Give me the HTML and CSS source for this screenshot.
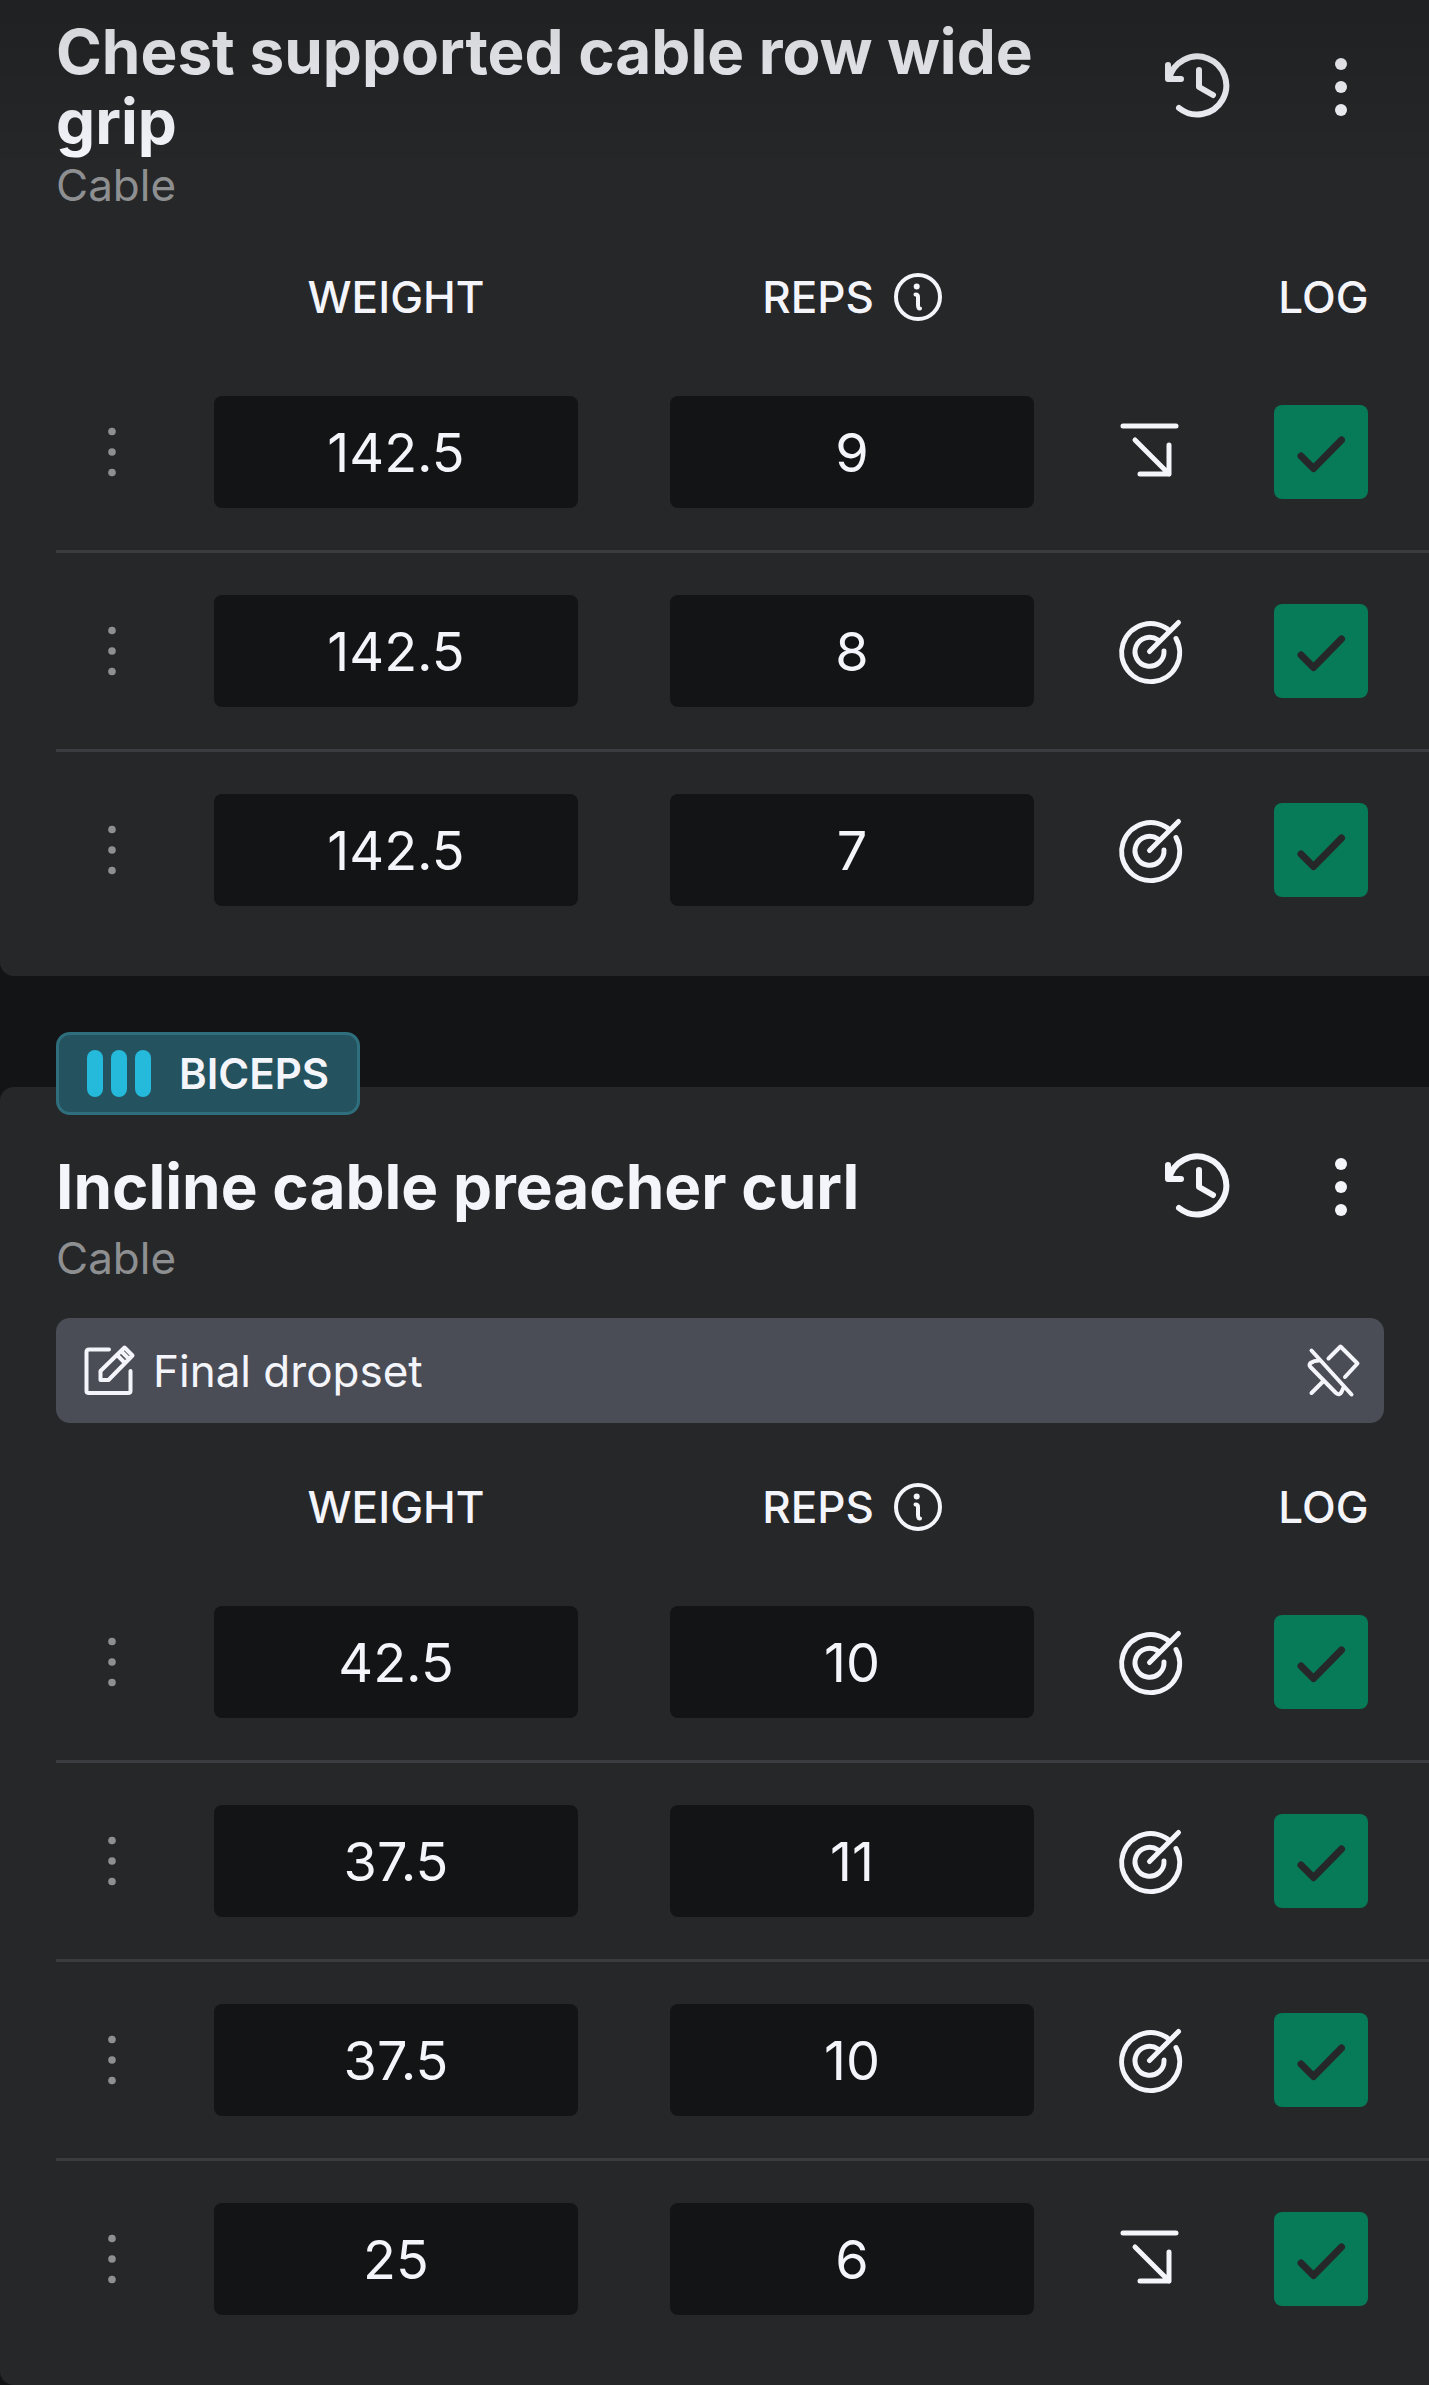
FILE: index.html
```html
<!DOCTYPE html>
<html lang="en">
<head>
  <meta charset="UTF-8" />
  <meta name="viewport" content="width=device-width, initial-scale=1.0" />
  <title>Workout</title>
  <link rel="stylesheet" href="styles.css">
</head>
<body>
  <svg class="sprite" aria-hidden="true">
    <symbol id="i-history" viewBox="0 0 72 72">
      <path d="M16 57A29 29 0 1 0 6 28M5 14V28H18M36 19V36L50 44" stroke-width="6" />
    </symbol>
    <symbol id="i-more" viewBox="0 0 72 72">
      <g class="solid"><circle cx="36" cy="13" r="6" /><circle cx="36" cy="36" r="6" /><circle cx="36" cy="59" r="6" /></g>
    </symbol>
    <symbol id="i-grip" viewBox="0 0 12 52">
      <g class="solid"><circle cx="6" cy="5.5" r="3.8" /><circle cx="6" cy="26" r="3.8" /><circle cx="6" cy="46.5" r="3.8" /></g>
    </symbol>
    <symbol id="i-info" viewBox="0 0 48 48">
      <circle cx="24" cy="24" r="22" stroke-width="4" />
      <circle class="solid" cx="22.7" cy="13.5" r="3" />
      <path d="M21.5 21.5Q24 21.5 24 24V32Q24 35.500 26 35.500" stroke-width="4" />
    </symbol>
    <symbol id="i-arrow" viewBox="-2 -2 68 68">
      <path d="M6 6H59M18 20L52 54M52 25V54H23" stroke-width="5" />
    </symbol>
    <symbol id="i-target" viewBox="-2 -2 68 68">
      <path d="M59 19.500A29 29 0 1 1 53 12M47 32A14.500 14.500 0 1 1 41 21M61.500 3.500L32.500 32.500" stroke-width="5" />
    </symbol>
    <symbol id="i-check" viewBox="0 0 94 94">
      <path d="M27 51L39.500 63.500L67.500 35" stroke-width="7" />
    </symbol>
    <symbol id="i-edit" viewBox="0 0 56 56">
      <path d="M28 6.500H8Q5.500 6.500 5.500 9V48Q5.500 50 8 50H47Q49.500 50 49.500 48V28M43.500 4.500L51.500 12.500L27.500 37H19.500V28ZM36 12L44 20M40 8L48 16" stroke-width="4" />
    </symbol>
    <symbol id="i-unpin" viewBox="0 0 56 56">
      <path d="M5.500 7.500L45.500 51.500M22.500 15.500L34.500 3.500L51.500 20.500L39 34M13 17.500Q8 17.500 4.500 20Q2.500 22 4.500 24L30 50Q33.500 53 35.500 49L38 43.500M17.500 38L5.500 50" stroke-width="4" />
    </symbol>
  </svg>

  <main>
    <section class="card card-first">
      <div class="card-head">
        <h2>Chest supported cable row wide grip</h2>
        <button class="icon-btn" aria-label="History"><svg><use href="#i-history" /></svg></button>
        <button class="icon-btn" aria-label="More"><svg><use href="#i-more" /></svg></button>
      </div>
      <p class="equipment">Cable</p>
      <table class="sets">
        <thead>
          <tr>
            <th class="col-grip"></th>
            <th>WEIGHT</th>
            <th><span class="reps">REPS <svg class="info"><use href="#i-info" /></svg></span></th>
            <th class="col-goal"></th>
            <th class="col-log">LOG</th>
          </tr>
        </thead>
        <tbody>
          <tr>
            <td><button class="grip" aria-label="Set options"><svg><use href="#i-grip" /></svg></button></td>
            <td><input type="text" value="142.5" aria-label="Weight" /></td>
            <td><input type="text" value="9" aria-label="Reps" /></td>
            <td><svg class="goal"><use href="#i-arrow" /></svg></td>
            <td><label class="check"><input type="checkbox" checked aria-label="Log set" /><svg><use href="#i-check" /></svg></label></td>
          </tr>
          <tr>
            <td><button class="grip" aria-label="Set options"><svg><use href="#i-grip" /></svg></button></td>
            <td><input type="text" value="142.5" aria-label="Weight" /></td>
            <td><input type="text" value="8" aria-label="Reps" /></td>
            <td><svg class="goal"><use href="#i-target" /></svg></td>
            <td><label class="check"><input type="checkbox" checked aria-label="Log set" /><svg><use href="#i-check" /></svg></label></td>
          </tr>
          <tr>
            <td><button class="grip" aria-label="Set options"><svg><use href="#i-grip" /></svg></button></td>
            <td><input type="text" value="142.5" aria-label="Weight" /></td>
            <td><input type="text" value="7" aria-label="Reps" /></td>
            <td><svg class="goal"><use href="#i-target" /></svg></td>
            <td><label class="check"><input type="checkbox" checked aria-label="Log set" /><svg><use href="#i-check" /></svg></label></td>
          </tr>
        </tbody>
      </table>
    </section>

    <section class="card">
      <div class="muscle"><span class="bars"><i></i><i></i><i></i></span>BICEPS</div>
      <div class="card-head">
        <h2>Incline cable preacher curl</h2>
        <button class="icon-btn" aria-label="History"><svg><use href="#i-history" /></svg></button>
        <button class="icon-btn" aria-label="More"><svg><use href="#i-more" /></svg></button>
      </div>
      <p class="equipment">Cable</p>
      <div class="note">
        <button class="note-text"><svg><use href="#i-edit" /></svg>Final dropset</button>
        <button class="note-pin" aria-label="Unpin note"><svg><use href="#i-unpin" /></svg></button>
      </div>
      <table class="sets">
        <thead>
          <tr>
            <th class="col-grip"></th>
            <th>WEIGHT</th>
            <th><span class="reps">REPS <svg class="info"><use href="#i-info" /></svg></span></th>
            <th class="col-goal"></th>
            <th class="col-log">LOG</th>
          </tr>
        </thead>
        <tbody>
          <tr>
            <td><button class="grip" aria-label="Set options"><svg><use href="#i-grip" /></svg></button></td>
            <td><input type="text" value="42.5" aria-label="Weight" /></td>
            <td><input type="text" value="10" aria-label="Reps" /></td>
            <td><svg class="goal"><use href="#i-target" /></svg></td>
            <td><label class="check"><input type="checkbox" checked aria-label="Log set" /><svg><use href="#i-check" /></svg></label></td>
          </tr>
          <tr>
            <td><button class="grip" aria-label="Set options"><svg><use href="#i-grip" /></svg></button></td>
            <td><input type="text" value="37.5" aria-label="Weight" /></td>
            <td><input type="text" value="11" aria-label="Reps" /></td>
            <td><svg class="goal"><use href="#i-target" /></svg></td>
            <td><label class="check"><input type="checkbox" checked aria-label="Log set" /><svg><use href="#i-check" /></svg></label></td>
          </tr>
          <tr>
            <td><button class="grip" aria-label="Set options"><svg><use href="#i-grip" /></svg></button></td>
            <td><input type="text" value="37.5" aria-label="Weight" /></td>
            <td><input type="text" value="10" aria-label="Reps" /></td>
            <td><svg class="goal"><use href="#i-target" /></svg></td>
            <td><label class="check"><input type="checkbox" checked aria-label="Log set" /><svg><use href="#i-check" /></svg></label></td>
          </tr>
          <tr>
            <td><button class="grip" aria-label="Set options"><svg><use href="#i-grip" /></svg></button></td>
            <td><input type="text" value="25" aria-label="Weight" /></td>
            <td><input type="text" value="6" aria-label="Reps" /></td>
            <td><svg class="goal"><use href="#i-arrow" /></svg></td>
            <td><label class="check"><input type="checkbox" checked aria-label="Log set" /><svg><use href="#i-check" /></svg></label></td>
          </tr>
        </tbody>
      </table>
    </section>
  </main>
</body>
</html>
```
FILE: styles.css
```css
* {
  box-sizing: border-box;
}
body {
  margin: 0;
  min-height: 100vh;
  font-family: Inter, sans-serif;
  font-size: 44px;
  background: #131416;
  color: #f4f5fa;
}
/* fade under the top bar */
body::before {
  content: "";
  position: fixed;
  top: 0;
  left: 0;
  right: 0;
  height: 160px;
  background: linear-gradient(rgba(0, 0, 0, 0.15), rgba(0, 0, 0, 0));
  pointer-events: none;
  z-index: 1;
}
button {
  font: inherit;
  color: inherit;
  background: none;
  border: none;
  padding: 0;
  cursor: pointer;
}
svg {
  display: block;
  fill: none;
  stroke: currentColor;
  stroke-linecap: round;
  stroke-linejoin: round;
}
.solid {
  fill: currentColor;
  stroke: none;
}
.sprite {
  position: absolute;
  width: 0;
  height: 0;
}
.card {
  position: relative;
  background: #262729;
  border-radius: 14px 0 0 14px;
  padding: 57px 0 28px 56px;
}
.card-first {
  border-top-left-radius: 0;
  padding-top: 17px;
  margin-bottom: 111px;
}
.card-head {
  display: flex;
  align-items: center;
  gap: 56px;
  min-height: 86px;
  padding-right: 45px;
}
.card-head h2 {
  flex: 1;
  margin: 0;
  font-size: 62px;
  line-height: 70px;
  font-weight: 700;
}
.icon-btn {
  width: 86px;
  height: 72px;
}
.icon-btn svg {
  width: 72px;
  height: 72px;
  margin: 0 auto;
}
.equipment {
  margin: 0;
  line-height: 56px;
  color: #8e8f91;
}
.muscle {
  position: absolute;
  top: -55px;
  left: 56px;
  height: 83px;
  display: flex;
  align-items: center;
  gap: 28px;
  padding: 0 28px;
  border: 3px solid #2f6f7d;
  border-radius: 14px;
  background: #24535f;
  font-size: 42px;
  font-weight: 600;
}
.bars {
  display: flex;
  gap: 8px;
}
.bars i {
  width: 16px;
  height: 47px;
  border-radius: 8px;
  background: #25b9dc;
}
.note {
  display: flex;
  align-items: center;
  justify-content: space-between;
  height: 105px;
  margin: 32px 45px 0 0;
  padding: 0 22px 0 25px;
  border-radius: 14px;
  background: #4b4d56;
}
.note svg {
  width: 56px;
  height: 56px;
}
.note-text {
  display: flex;
  align-items: center;
  gap: 16px;
}
.sets {
  width: 100%;
  table-layout: fixed;
  border-spacing: 0;
}
.sets th {
  height: 141px;
  padding: 27px 0 0;
  font-size: 44px;
  font-weight: 500;
}
.sets .col-grip {
  width: 112px;
}
.sets .col-goal {
  width: 138px;
}
.sets .col-log {
  width: 211px;
}
.reps {
  display: flex;
  align-items: center;
  justify-content: center;
  gap: 20px;
}
.info {
  width: 48px;
  height: 48px;
}
.sets td {
  height: 199px;
  padding: 42px 0;
  border-bottom: 3px solid #3b3c3f;
}
.sets tbody tr:last-child td {
  height: 196px;
  border-bottom: none;
}
.sets td:nth-child(2), .sets td:nth-child(3) {
  padding: 42px 46px;
}
.sets td:last-child {
  padding-right: 5px;
}
.sets input[type="text"] {
  display: block;
  width: 100%;
  height: 112px;
  padding: 0;
  border: none;
  border-radius: 8px;
  background: #131416;
  color: #f4f5fa;
  font-family: inherit;
  font-size: 54px;
  text-align: center;
}
.grip {
  display: block;
  width: 100%;
  color: #8e8f91;
}
.grip svg {
  width: 12px;
  height: 52px;
  margin: 0 auto;
}
.goal {
  width: 68px;
  height: 68px;
  margin: 0 auto;
}
.check {
  display: grid;
  width: 94px;
  height: 94px;
  margin: 0 auto;
  cursor: pointer;
}
.check input, .check svg {
  grid-area: 1 / 1;
  width: 94px;
  height: 94px;
  margin: 0;
}
.check input {
  appearance: none;
  border-radius: 8px;
  background: #393b3e;
}
.check input:checked {
  background: #077a58;
}
.check svg {
  color: #262729;
  pointer-events: none;
  visibility: hidden;
}
.check input:checked + svg {
  visibility: visible;
}
```
